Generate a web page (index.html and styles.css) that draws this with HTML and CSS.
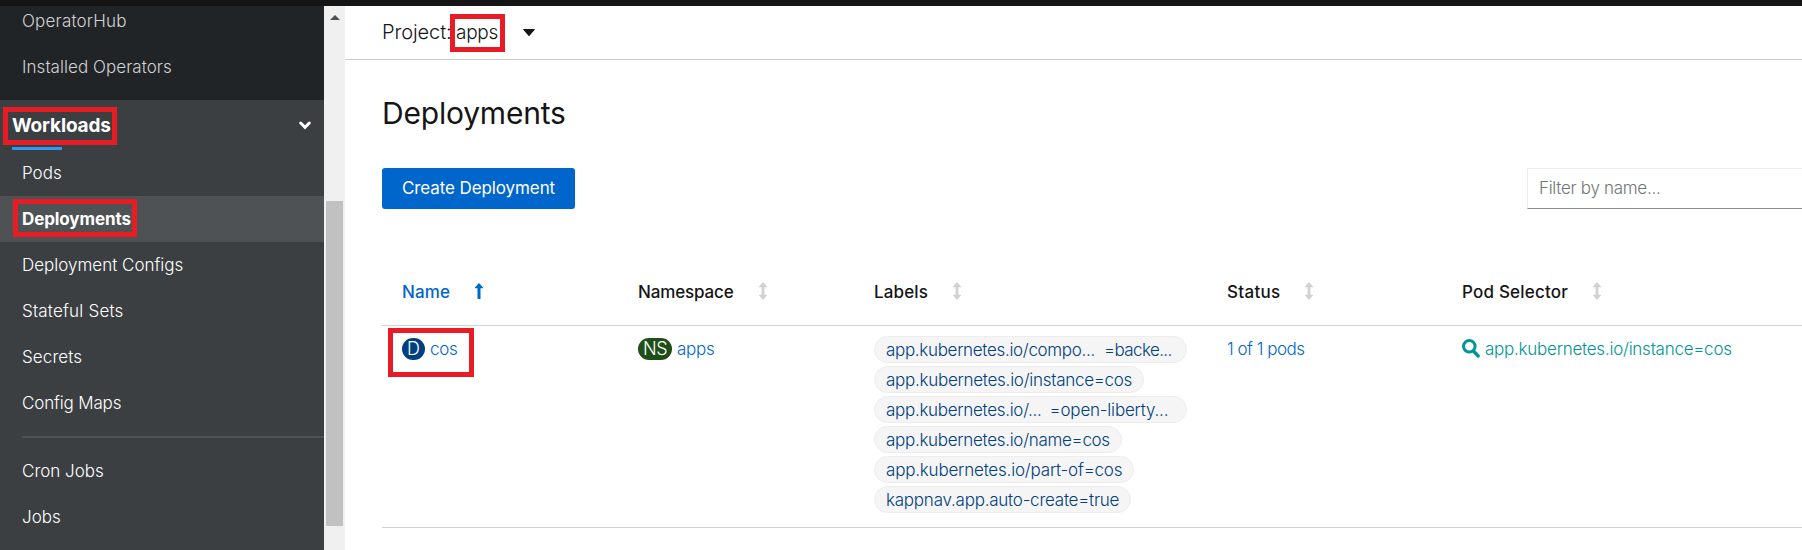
FILE: index.html
```html
<!DOCTYPE html>
<html lang="en">
<head>
<meta charset="utf-8">
<title>Deployments</title>
<link rel="stylesheet" href="styles.css">
</head>
<body>
<svg class="defs" width="0" height="0">
  <symbol id="sort" viewBox="0 0 8 18"><path d="M4 0 8 4.6v.7H5.400v7.400H8v.7L4 18 0 13.400v-.7h2.600V5.300H0v-.7z"/></symbol>
</svg>
<div class="masthead"></div>
<div class="shell">
  <nav class="sidebar">
    <div class="group group-dark">
      <a class="item n-hub">OperatorHub</a>
      <a class="item n-installed">Installed Operators</a>
    </div>
    <div class="group-title">
      <span class="marked mark-workloads"><b class="title-text">Workloads</b></span>
      <svg class="chevron" viewBox="0 0 12 9"><path d="M1.7 2 6 6.3 10.300 2" fill="none" stroke="#fff" stroke-width="3" stroke-linecap="round"/></svg>
    </div>
    <a class="item">Pods</a>
    <a class="item current"><span class="marked mark-deployments"><b class="current-text">Deployments</b></span></a>
    <a class="item">Deployment Configs</a>
    <a class="item n-stateful">Stateful Sets</a>
    <a class="item n-secrets">Secrets</a>
    <a class="item n-maps">Config Maps</a>
    <div class="divider"></div>
    <a class="item">Cron Jobs</a>
    <a class="item">Jobs</a>
  </nav>
  <div class="scrollbar">
    <svg class="scroll-up" viewBox="0 0 10 5"><path d="M0 5 5 0l5 5z" fill="#505050"/></svg>
    <div class="thumb"></div>
  </div>
  <main class="content">
    <div class="project-bar">
      <span class="project-label">Project:</span>
      <span class="marked mark-project"><span class="project-name">apps</span></span>
      <svg class="caret" viewBox="0 0 12 7"><path d="M.5 0h11q.6.4 0 1L6.500 6.700q-.5.4-1 0L.5 1Q-.1.4.5 0z" fill="#151515"/></svg>
    </div>
    <h1 class="heading"><span class="heading-text">Deployments</span></h1>
    <div class="toolbar">
      <button class="create"><span class="create-text">Create Deployment</span></button>
      <div class="filter"><span class="filter-text">Filter by name...</span></div>
    </div>
    <div class="table">
      <div class="row head">
        <div class="cell sorted"><span class="th-name">Name</span><svg class="sort-up" viewBox="0 0 8 16"><path d="M4 0 8 4.600v.7H5.500V16h-3V5.300H0v-.7z" fill="#06c"/></svg></div>
        <div class="cell"><span class="th-namespace">Namespace</span><svg class="sort"><use href="#sort"/></svg></div>
        <div class="cell"><span class="th-labels">Labels</span><svg class="sort"><use href="#sort"/></svg></div>
        <div class="cell"><span class="th-status">Status</span><svg class="sort"><use href="#sort"/></svg></div>
        <div class="cell"><span class="th-selector">Pod Selector</span><svg class="sort"><use href="#sort"/></svg></div>
      </div>
      <div class="row body">
        <div class="cell"><span class="marked mark-cos"><span class="badge badge-d">D</span><a class="link t-cos">cos</a></span></div>
        <div class="cell"><span class="badge badge-ns">NS</span><a class="link t-apps">apps</a></div>
        <div class="chips">
          <span class="chip wide"><span class="c1">app.kubernetes.io/compo...</span><span class="c1b">=backe...</span></span>
          <span class="chip"><span class="c2">app.kubernetes.io/instance=cos</span></span>
          <span class="chip wide"><span class="c3">app.kubernetes.io/...</span><span class="c3b">=open-liberty...</span></span>
          <span class="chip"><span class="c4">app.kubernetes.io/name=cos</span></span>
          <span class="chip"><span class="c5">app.kubernetes.io/part-of=cos</span></span>
          <span class="chip"><span class="c6">kappnav.app.auto-create=true</span></span>
        </div>
        <div class="cell"><a class="link t-pods">1 of 1 pods</a></div>
        <div class="cell"><svg class="search" viewBox="0 0 18 19"><circle cx="7.300" cy="7.300" r="5.800" fill="none" stroke="#009596" stroke-width="3"/><path d="m11.500 12 4.700 5" stroke="#009596" stroke-width="3.300" stroke-linecap="round"/></svg><a class="selector t-selector">app.kubernetes.io/instance=cos</a></div>
      </div>
    </div>
  </main>
</div>
</body>
</html>
```
FILE: styles.css
```css
*, *::after { box-sizing: border-box; }
body {
  margin: 0;
  width: 1802px;
  height: 550px;
  overflow: hidden;
  background: #fff;
  color: #151515;
  font-family: Inter, "Open Sans", sans-serif;
  font-size: 17px;
  white-space: nowrap;
}
.defs { position: absolute; }
.masthead { height: 6px; background: #151515; }
.shell { display: flex; height: 544px; }

.sidebar { width: 324px; background: #3c3f42; overflow: hidden; flex: none; }
.group-dark { height: 94px; background: #212427; overflow: hidden; }
.group-dark .item { color: #d2d2d2; }
.group-dark .item:first-child { margin-top: -8px; }
.item {
  display: flex;
  align-items: center;
  height: 46px;
  padding-left: 22px;
  color: #fff;
  font-weight: 350;
}
.n-hub { letter-spacing: .2px; }
.n-installed { letter-spacing: .05px; }
.n-stateful { letter-spacing: .2px; }
.n-secrets { letter-spacing: .1px; }
.n-maps { letter-spacing: -.15px; }
.current { background: #4f5255; }
.current-text { font-weight: 700; letter-spacing: -.1px; }
.group-title {
  display: flex;
  align-items: center;
  justify-content: space-between;
  height: 50px;
  padding: 0 13px 0 12px;
  color: #fff;
  background: linear-gradient(#2b9af3, #2b9af3) 12px 47px / 50px 3px no-repeat;
}
.title-text { font-size: 19px; letter-spacing: -.15px; }
.chevron { width: 12px; height: 9px; }
.divider { height: 2px; margin: 10px 0 10px 22px; background: #4f5255; }

.scrollbar { width: 21px; flex: none; background: #f0f0f0; display: flex; flex-direction: column; align-items: center; }
.scroll-up { width: 10px; height: 5px; margin-top: 9px; }
.thumb { width: 17px; height: 325px; margin-top: 181px; background: #c1c1c1; }

.content { flex: 1; min-width: 0; overflow: hidden; }
.project-bar {
  display: flex;
  align-items: center;
  height: 54px;
  padding: 0 0 1px 37px;
  border-bottom: 1px solid #ccc;
  font-size: 20px;
  font-weight: 300;
}
.project-label { width: 68px; letter-spacing: -.1px; }
.project-name { margin-left: 6px; width: 42px; font-size: 19px; letter-spacing: -.3px; }
.caret { width: 12px; height: 7px; margin-left: 25px; }
.heading { margin: 0; height: 108px; padding: 34px 0 0 37px; font-size: 30px; line-height: 38px; font-weight: 400; letter-spacing: -.2px; }
.toolbar { display: flex; justify-content: space-between; height: 41px; padding-left: 37px; }
.create { width: 193px; height: 41px; border: 0; padding: 0 0 1px 20px; border-radius: 3px; background: #06c; color: #fff; font: inherit; text-align: left; letter-spacing: -.1px; }
.filter { width: 275px; height: 41px; padding-left: 11px; border: 1px solid #ededed; border-right: 0; border-bottom-color: #8a8d90; color: #737679; font-weight: 350; line-height: 38px; letter-spacing: -.3px; }

.table { margin: 49px 0 0 37px; }
.row { display: grid; grid-template-columns: 236px 236px 353px 235px 1fr; padding-left: 20px; border-bottom: 1px solid #d2d2d2; }
.head { height: 68px; font-weight: 500; }
.head .cell { display: flex; align-items: center; height: 68px; }
.sorted { color: #06c; }
.th-name { letter-spacing: .1px; }
.th-namespace { letter-spacing: -.15px; }
.th-labels { letter-spacing: .15px; }
.th-status { letter-spacing: .3px; }
.th-selector { letter-spacing: .2px; }
.sort { width: 8px; height: 18px; margin: -2px 0 0 25px; fill: #d2d2d2; }
.sort-up { width: 8px; height: 16px; margin: -2px 0 0 25px; }
.body { height: 202px; padding-top: 10px; font-weight: 300; }
.body .cell { display: flex; align-items: center; height: 26px; }
.link { color: #06c; }
.t-cos { letter-spacing: -.3px; }
.t-apps { letter-spacing: -.25px; }
.t-pods { letter-spacing: -.5px; }
.badge { height: 22px; border-radius: 11px; color: #fff; line-height: 22px; font-size: 18px; text-align: center; flex: none; }
.badge-d { width: 23px; margin-right: 5px; background: #004080; }
.badge-ns { width: 34px; margin-right: 5px; background: #1e4f18; letter-spacing: -.5px; }
.chips { display: flex; flex-direction: column; align-items: flex-start; gap: 3px; }
.chip { display: flex; height: 27px; padding: 0 11px; border: 1px solid #ededed; border-radius: 14px; background: #f5f5f5; color: #004080; line-height: 26px; }
.wide { width: 313px; }
.c1 { letter-spacing: -.32px; }
.c1b { margin-left: 9px; letter-spacing: -.6px; }
.c2 { letter-spacing: -.27px; }
.c3 { letter-spacing: -.3px; }
.c3b { margin-left: 8px; letter-spacing: -.2px; }
.c4 { letter-spacing: -.3px; }
.c5 { letter-spacing: -.2px; }
.c6 { letter-spacing: -.23px; }
.search { width: 18px; height: 19px; margin: -2px 5px 0 0; }
.selector { color: #009596; letter-spacing: -.25px; }

/* Red highlight frames drawn over the interface. */
.marked { position: relative; display: flex; align-items: center; }
.marked::after { content: ""; position: absolute; border: 5px solid #e81c24; }
.mark-workloads::after { left: -9px; top: -7px; width: 114px; height: 38px; }
.mark-deployments::after { left: -9px; top: -10px; width: 124px; height: 38px; }
.mark-project::after { left: 0; top: -7px; width: 55px; height: 38px; }
.mark-cos::after { left: -14px; top: -10px; width: 86px; height: 49px; }
```
